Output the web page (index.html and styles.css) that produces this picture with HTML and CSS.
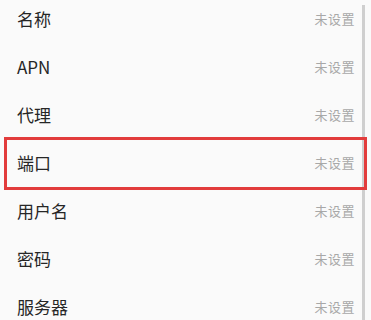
FILE: index.html
```html
<!DOCTYPE html>
<html lang="zh-CN">
<head>
<meta charset="utf-8">
<link rel="stylesheet" href="styles.css">
</head>
<body>
<div class="screen">
  <div class="list">
    <div class="row"><span class="label">名称</span><span class="value">未设置</span></div>
    <div class="row"><span class="label">APN</span><span class="value">未设置</span></div>
    <div class="row"><span class="label">代理</span><span class="value">未设置</span></div>
    <div class="row"><span class="label">端口</span><span class="value">未设置</span></div>
    <div class="row"><span class="label">用户名</span><span class="value">未设置</span></div>
    <div class="row"><span class="label">密码</span><span class="value">未设置</span></div>
    <div class="row"><span class="label">服务器</span><span class="value">未设置</span></div>
  </div>
  <div class="scrollbar"></div>
  <div class="highlight"></div>
</div>
</body>
</html>
```
FILE: styles.css
```css
html, body {
  margin: 0;
  padding: 0;
  background: #fafafa;
}
.screen {
  position: relative;
  width: 371px;
  height: 320px;
  overflow: hidden;
  background: #fafafa;
  font-family: "Noto Sans CJK SC", "Noto Sans", sans-serif;
}
.list {
  margin-top: -6px;
  padding: 0 16px 0 17px;
  display: flex;
  flex-direction: column;
}
.row {
  height: 48px;
  display: flex;
  align-items: center;
  justify-content: space-between;
}
.label {
  font-size: 17px;
  font-weight: 400;
  color: #262626;
}
.value {
  font-size: 13px;
  color: #a8a8a8;
  letter-spacing: 0.5px;
}
.scrollbar {
  position: absolute;
  left: 362px;
  top: 5px;
  width: 3px;
  height: 320px;
  background: #cfcfcf;
}
.highlight {
  position: absolute;
  left: 4px;
  top: 137px;
  width: 357px;
  height: 47px;
  border: 3px solid #e23c3c;
}
```
